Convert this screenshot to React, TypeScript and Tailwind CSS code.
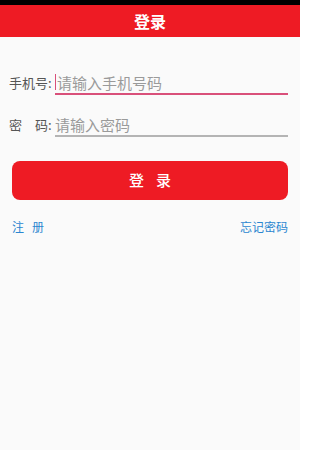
export default function App() {
  const font = { fontFamily: '"Noto Sans CJK SC", "Noto Sans", sans-serif' };
  return (
    <div className="w-[300px] h-[450px] bg-[#fafafa] flex flex-col" style={font}>
      {/* status bar */}
      <div className="h-[5px] bg-black" />
      {/* title bar */}
      <div className="h-[32px] bg-[#ee1b24] flex items-center justify-center">
        <span className="text-white text-[16px] font-semibold leading-none">登录</span>
      </div>

      <div className="px-[9px] pt-[34px]">
        {/* phone row */}
        <div className="flex items-end h-[24px]">
          <span className="w-[46px] text-[13px] text-[#555] leading-none pb-[6px]">手机号:</span>
          <div className="flex-1 h-full flex items-center border-b-2 border-[#d9507a] mr-[3px]">
            <span className="w-px h-[16px] bg-[#d9507a] mr-px" />
            <span className="text-[15px] text-[#9a9a9a] leading-none">请输入手机号码</span>
          </div>
        </div>

        {/* password row */}
        <div className="flex items-end h-[24px] mt-[18px]">
          <span className="w-[46px] text-[13px] text-[#555] leading-none pb-[6px]">密　码:</span>
          <div className="flex-1 h-full flex items-center border-b-2 border-[#b4b4b4] mr-[3px]">
            <span className="text-[15px] text-[#9a9a9a] leading-none">请输入密码</span>
          </div>
        </div>
      </div>

      {/* login button */}
      <div className="px-[12px] mt-[24px]">
        <button className="w-full h-[39px] rounded-[8px] bg-[#ee1b24] flex items-center justify-center gap-[12px] text-white text-[15px] font-medium">
          <span>登</span>
          <span>录</span>
        </button>
      </div>

      {/* links */}
      <div className="flex justify-between items-center px-[12px] mt-[18px] text-[12px] text-[#2a86d0]">
        <span className="flex gap-[8px]">
          <span>注</span>
          <span>册</span>
        </span>
        <span>忘记密码</span>
      </div>
    </div>
  );
}
